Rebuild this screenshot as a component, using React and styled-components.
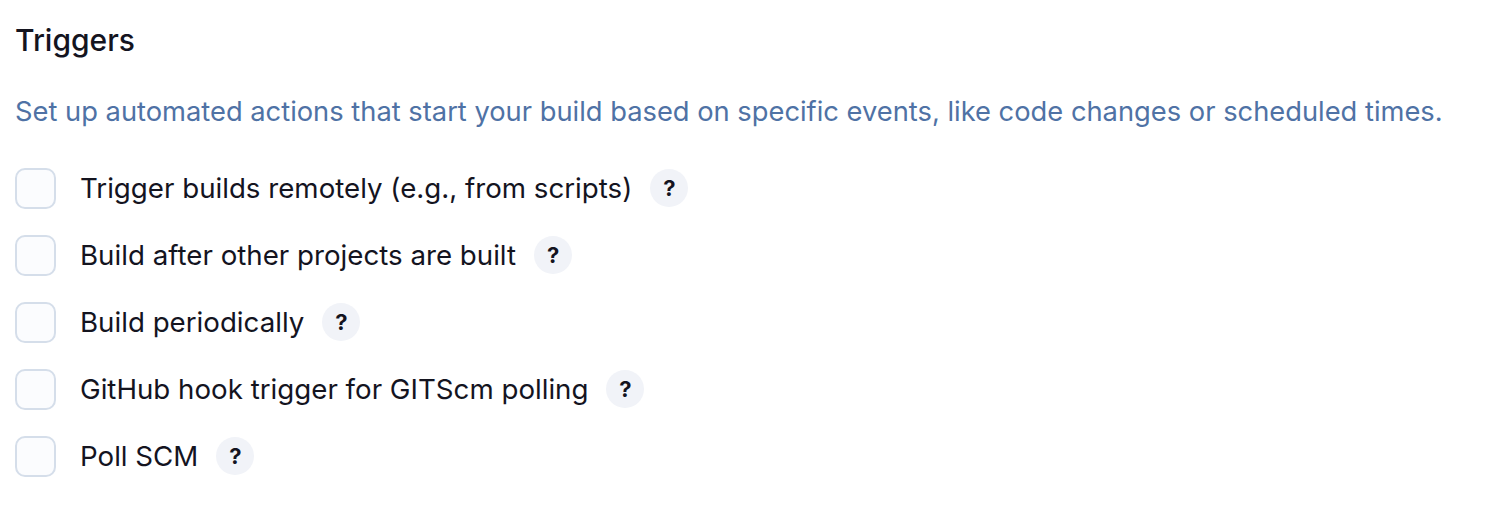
import React from "react";
import styled, { createGlobalStyle } from "styled-components";

const GlobalStyle = createGlobalStyle`
  body {
    margin: 0;
    background: #ffffff;
    font-family: Inter, "Noto Sans", sans-serif;
  }
`;

const Section = styled.div`
  padding: 22px 15px 0 15px;
`;

const Heading = styled.h2`
  font-size: 30px;
  font-weight: 450;
  color: #14141f;
  margin: 0;
  line-height: 36px;
`;

const Description = styled.p`
  font-size: 27.3px;
  color: #4f72a5;
  margin: 39px 0 0 0;
  line-height: 30px;
`;

const List = styled.div`
  display: flex;
  flex-direction: column;
  gap: 25px;
  margin-top: 40px;
`;

const Row = styled.label`
  display: flex;
  align-items: center;
  height: 42px;
`;

const Box = styled.span`
  width: 37px;
  height: 37px;
  border: 2.5px solid #d5deea;
  border-radius: 10px;
  background: #fbfcfe;
  flex-shrink: 0;
`;

const Label = styled.span`
  margin-left: 24px;
  font-size: 27.7px;
  color: #14141f;
`;

const Help = styled.span`
  margin-left: 18px;
  width: 38px;
  height: 38px;
  border-radius: 50%;
  background: #f1f3f8;
  display: flex;
  align-items: center;
  justify-content: center;
  font-size: 22px;
  font-weight: 700;
  color: #14141f;
`;

const triggers = [
  "Trigger builds remotely (e.g., from scripts)",
  "Build after other projects are built",
  "Build periodically",
  "GitHub hook trigger for GITScm polling",
  "Poll SCM",
];

export default function App() {
  return (
    <>
      <GlobalStyle />
      <Section>
        <Heading>Triggers</Heading>
        <Description>
          Set up automated actions that start your build based on specific
          events, like code changes or scheduled times.
        </Description>
        <List>
          {triggers.map((t) => (
            <Row key={t}>
              <Box />
              <Label>{t}</Label>
              <Help>?</Help>
            </Row>
          ))}
        </List>
      </Section>
    </>
  );
}
